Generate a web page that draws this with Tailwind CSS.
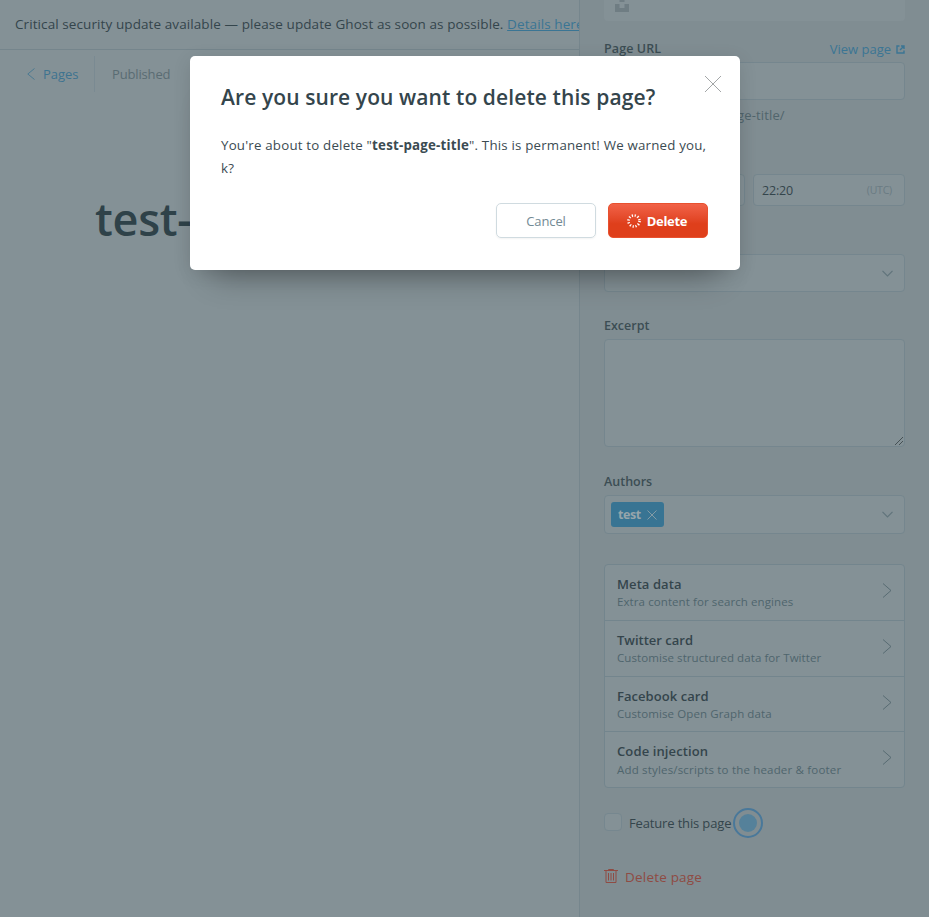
<!DOCTYPE html>
<html lang="en">
<head>
<meta charset="utf-8">
<title>Edit page</title>
<script src="https://cdn.jsdelivr.net/npm/@tailwindcss/browser@4"></script>
</head>
<body class="relative h-[917px] w-[929px] overflow-hidden bg-[#849196] font-['Open_Sans','Noto_Sans',sans-serif] text-[13px] text-[#34454c]">
<div class="flex h-[917px] w-[929px]">
  <main class="flex w-[579px] flex-col overflow-hidden whitespace-nowrap">
    <div class="flex h-[50px] shrink-0 items-center border-b border-[#75858c] pl-[15px] text-[13.5px] tracking-[0.09px]">
      <span>Critical security update available — please update Ghost as soon as possible. <a class="text-[#3a7594] underline">Details here</a></span>
    </div>
    <header class="flex h-[48px] items-center">
      <a class="flex h-[36px] w-[95px] items-center border-r border-[#7a8a92] pl-[27px] text-[#3d7390]">
        <svg class="mr-[8px] h-[12px] w-[8px]" viewBox="0 0 8 12" fill="none" stroke="currentColor" stroke-width=".8"><path d="M7.5 .5L.8 6l6.7 5.5"/></svg>
        <span class="pt-[2px] tracking-[-0.05px]">Pages</span>
      </a>
      <span class="pt-[2px] pl-[17px] tracking-[-0.15px] text-[#5a6c73]">Published</span>
    </header>
    <h1 class="mt-[88px] pl-[95px] text-[45px] leading-[66px] font-semibold tracking-[-0.3px] text-[#2f4249]">test-page-title</h1>
  </main>

  <aside class="flex w-[350px] flex-col border-l border-[#76868d] bg-[#808d92] px-[24px]">
    <div class="h-[21px] shrink-0 rounded-b-[4px] bg-[#849196] pl-[11px]">
      <svg class="h-[12px] w-[14px] text-[#6f7d83]" viewBox="0 0 14 12" fill="currentColor"><path d="M4.500 0h5v2h-5zM0 4h4.500v4h5v-4H14V12H0z"/></svg>
    </div>
    <div class="mt-[18px] flex h-[20px] shrink-0 items-center justify-between">
      <label class="text-[12.5px] font-semibold tracking-[0.1px] text-[#3c4d54]">Page URL</label>
      <a class="flex items-center gap-[5px] text-[#3b7594]"><span class="pt-px">View page</span>
        <svg class="h-[9px] w-[9px]" viewBox="0 0 9 9" fill="none" stroke="currentColor" stroke-width="1.4"><path d="M3.500 1H1v7h7V5.500M5 1h3v3M8 1L4 5"/></svg>
      </a>
    </div>
    <div class="mt-[3px] h-[38px] shrink-0 rounded-[4px] border border-[#75868e] bg-[#849196]"></div>
    <p class="mt-[5px] h-[20px] shrink-0 pl-[133px] leading-[20px] tracking-[0.15px] text-[#51656c]">ge-title/</p>
    <div class="mt-[49px] flex h-[32px] shrink-0 gap-[8px]">
      <div class="w-[141px] rounded-[4px] border border-[#75868e] bg-[#849196]"></div>
      <div class="flex flex-1 items-center justify-between rounded-[4px] border border-[#75868e] bg-[#849196] pr-[12px] pl-[8px] text-[12.5px] tracking-[-0.2px]"><span class="pt-[2px]">22:20</span><span class="pt-px text-[10.5px] text-[#6a7b83]">(UTC)</span></div>
    </div>
    <div class="mt-[48px] flex h-[38px] shrink-0 items-center justify-end rounded-[4px] border border-[#75868e] bg-[#849196] pr-[11px]">
      <svg class="h-[7px] w-[11px] text-[#61747b]" viewBox="0 0 11 7" fill="none" stroke="currentColor" stroke-width="1.200"><path d="M.5.8l5 5 5-5"/></svg>
    </div>
    <label class="mt-[24px] h-[20px] shrink-0 text-[12.5px] leading-[20px] font-semibold text-[#3c4d54]">Excerpt</label>
    <div class="mt-[3px] flex h-[108px] shrink-0 items-end justify-end rounded-[4px] border border-[#75868e] bg-[#849196] p-px">
      <svg class="h-[8px] w-[8px] text-[#3f4a4e]" viewBox="0 0 8 8" fill="none" stroke="currentColor" stroke-width=".9"><path d="M0 8L8 0M4 8l4-4"/></svg>
    </div>
    <label class="mt-[25px] h-[20px] shrink-0 text-[12.5px] leading-[20px] font-semibold text-[#3c4d54]">Authors</label>
    <div class="mt-[3px] flex h-[39px] shrink-0 items-center justify-between rounded-[4px] border border-[#75868e] bg-[#849196] pr-[11px] pl-[6px]">
      <span class="flex h-[25px] w-[53px] items-center gap-[6px] rounded-[3px] bg-[#387493] pl-[7px] text-[12.5px] font-bold tracking-[-0.4px] text-[#96a5ab]"><span class="pt-px">test</span>
        <svg class="h-[10px] w-[10px]" viewBox="0 0 10 10" fill="none" stroke="currentColor" stroke-width=".8"><path d="M.5.5l9 9M9.500.5l-9 9"/></svg>
      </span>
      <svg class="h-[7px] w-[11px] text-[#61747b]" viewBox="0 0 11 7" fill="none" stroke="currentColor" stroke-width="1.200"><path d="M.5.8l5 5 5-5"/></svg>
    </div>
    <ul class="mt-[30px] flex h-[224px] shrink-0 flex-col divide-y divide-[#73858d] rounded-[4px] border border-[#73858d] bg-[#849196]">
      <li class="flex h-[56px] items-center justify-between pr-[12px] pl-[12px]"><div><div class="h-[18px] text-[13px] leading-[18px] font-semibold tracking-[0.08px]">Meta data</div><div class="h-[18px] text-[11.5px] leading-[18px] tracking-[0.09px] text-[#4f656d]">Extra content for search engines</div></div><svg class="-mt-[4px] h-[15px] w-[10px] text-[#4c626a]" viewBox="0 0 10 15" fill="none" stroke="currentColor" stroke-width=".8"><path d="M1 .5l8 7-8 7"/></svg></li>
      <li class="flex h-[56px] items-center justify-between pr-[12px] pl-[12px]"><div><div class="h-[18px] text-[13px] leading-[18px] font-semibold">Twitter card</div><div class="h-[18px] text-[11.5px] leading-[18px] tracking-[0.08px] text-[#4f656d]">Customise structured data for Twitter</div></div><svg class="-mt-[4px] h-[15px] w-[10px] text-[#4c626a]" viewBox="0 0 10 15" fill="none" stroke="currentColor" stroke-width=".8"><path d="M1 .5l8 7-8 7"/></svg></li>
      <li class="flex h-[55px] items-center justify-between pr-[12px] pl-[12px]"><div><div class="h-[18px] text-[13px] leading-[20px] font-semibold tracking-[0.05px]">Facebook card</div><div class="h-[18px] text-[11.5px] leading-[20px] tracking-[0.1px] text-[#4f656d]">Customise Open Graph data</div></div><svg class="-mt-[4px] h-[15px] w-[10px] text-[#4c626a]" viewBox="0 0 10 15" fill="none" stroke="currentColor" stroke-width=".8"><path d="M1 .5l8 7-8 7"/></svg></li>
      <li class="flex h-[55px] items-center justify-between pr-[12px] pl-[12px]"><div><div class="h-[18px] text-[13px] leading-[18px] font-semibold tracking-[0.12px]">Code injection</div><div class="h-[18px] text-[11.5px] leading-[20px] tracking-[0.18px] text-[#4f656d]">Add styles/scripts to the header &amp; footer</div></div><svg class="-mt-[4px] h-[15px] w-[10px] text-[#4c626a]" viewBox="0 0 10 15" fill="none" stroke="currentColor" stroke-width=".8"><path d="M1 .5l8 7-8 7"/></svg></li>
    </ul>
    <div class="mt-[20px] flex h-[30px] shrink-0 items-center">
      <span class="-mt-[2px] mr-[7px] h-[18px] w-[18px] rounded-[4px] border border-[#76878f] bg-[#849196]"></span>
      <span class="w-[104px] pt-[2px] tracking-[-0.15px] whitespace-nowrap">Feature this page</span>
      <span class="flex h-[30px] w-[30px] items-center justify-center rounded-full border-2 border-[#49789a]"><span class="h-[18px] w-[18px] rounded-full bg-[#55819a]"></span></span>
    </div>
    <a class="mt-[29px] flex h-[20px] shrink-0 items-center gap-[7px] text-[13.5px] tracking-[0.2px] text-[#8f4b43]">
      <svg class="-mt-[2px] h-[14px] w-[14px]" viewBox="0 0 14 14" fill="none" stroke="currentColor"><path d="M0 1.500h14M4.500 1.500V.5h5v1M2 2v11.500h10V2M4.500 4v7.500M7 4v7.500M9.500 4v7.500"/></svg>
      Delete page
    </a>
  </aside>
</div>

<div role="dialog" class="absolute top-[56px] left-[190px] h-[214px] w-[550px] rounded-[5px] bg-white px-[31px] pt-[24px] whitespace-nowrap shadow-[0_28px_30px_-22px_rgba(0,0,0,0.32),0_4px_20px_-2px_rgba(0,0,0,0.14)]">
  <div class="flex justify-between">
    <h2 class="text-[21px] leading-[34px] font-semibold tracking-[0.1px]">Are you sure you want to delete this page?</h2>
    <svg class="mt-[-4px] -mr-[12px] h-[16px] w-[16px] text-[#8b8f91]" viewBox="0 0 16 16" fill="none" stroke="currentColor" stroke-width=".8"><path d="M0 0l16 16M16 0L0 16"/></svg>
  </div>
  <p class="mt-[20px] text-[13.3px] leading-[23px] tracking-[0.2px] text-[#3b4b52]">You're about to delete "<strong>test-page-title</strong>". This is permanent! We warned you,<br>k?</p>
  <div class="mt-[23px] mr-[1px] flex justify-end gap-[12px]">
    <button class="h-[35px] w-[100px] rounded-[5px] border border-[#d0dbe0] pt-[2px] text-[13px] tracking-[-0.1px] text-[#738a94] shadow-[0_1px_2px_rgba(0,0,0,0.05)]">Cancel</button>
    <button class="flex h-[35px] w-[100px] items-center justify-center gap-[6px] rounded-[5px] border border-[#e8512f] bg-linear-to-b from-[#f16247] from-0% to-[#df3f1b] to-60% pr-[2px] text-[13px] font-bold tracking-[-0.3px] text-white">
      <svg class="h-[14px] w-[14px]" viewBox="0 0 14 14" fill="none" stroke="currentColor" stroke-width="2.600" stroke-dasharray="1.200 1.680"><circle cx="7" cy="7" r="5.500"/></svg>
      <span class="pt-[2px]">Delete</span>
    </button>
  </div>
</div>
</body>
</html>
